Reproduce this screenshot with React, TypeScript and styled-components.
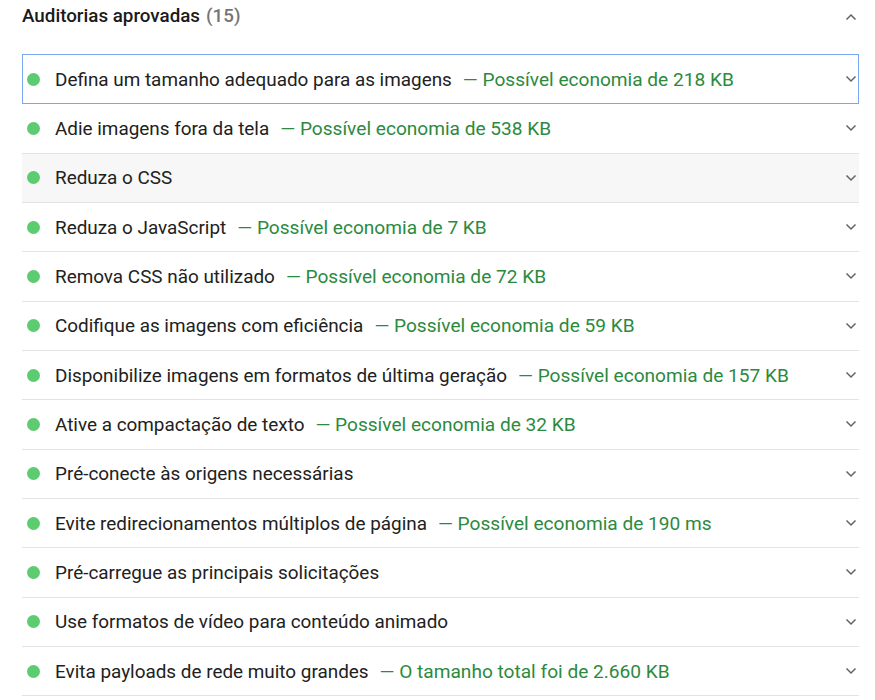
import React from "react";
import styled, { createGlobalStyle } from "styled-components";

const Global = createGlobalStyle`
  html, body { margin: 0; padding: 0; background: #ffffff; }
  body { font-family: Roboto, "Liberation Sans", Arial, sans-serif; color: #212121; }
`;

const Wrap = styled.div`
  padding: 0 16px 0 22px;
  width: 837px;
`;

const Header = styled.div`
  display: flex;
  align-items: center;
  justify-content: space-between;
  height: 34px;
  margin-bottom: 21px;
`;

const Title = styled.div`
  font-size: 18.8px;
  font-weight: 500;
  color: #1a1a1a;
  margin-top: -3px;
  display: flex;
  align-items: center;
  gap: 6px;
`;

const Count = styled.span`
  color: #757575;
  font-weight: 500;
`;

const List = styled.div`
  display: flex;
  flex-direction: column;
`;

const Row = styled.div<{ $focused?: boolean; $hover?: boolean }>`
  box-sizing: border-box;
  height: 49.33px;
  display: flex;
  align-items: center;
  padding: 0 0 0 5px;
  border-bottom: 1px solid #e3e3e3;
  background: ${(p) => (p.$hover ? "#f7f7f7" : "#ffffff")};
  ${(p) =>
    p.$focused &&
    `
    border: 1.5px solid #7aa6ef;
    height: 50.33px;
    margin-top: -1px;
    padding-left: 4px;
  `}
`;

const Dot = styled.span`
  width: 13px;
  height: 13px;
  border-radius: 50%;
  background: #5dcb6f;
  flex: none;
  margin-right: 15px;
`;

const Label = styled.span`
  font-size: 18.9px;
  color: #212121;
  white-space: nowrap;
`;

const Extra = styled.span`
  font-size: 19.1px;
  color: #2b8a3e;
  margin-left: 11px;
  white-space: nowrap;
`;

const ChevronBox = styled.span<{ $focused?: boolean }>`
  margin-left: auto;
  width: 14px;
  display: flex;
  align-items: center;
  justify-content: center;
  margin-right: ${(p) => (p.$focused ? "0px" : "1px")};
`;

const Chevron = ({ up }: { up?: boolean }) => (
  <svg width="12" height="8" viewBox="0 0 12 8">
    <polyline
      points={up ? "1.5,6.5 6,2 10.5,6.5" : "1.5,1.5 6,6 10.5,1.5"}
      fill="none"
      stroke="#5f6368"
      strokeWidth="1.5"
    />
  </svg>
);

const items: { label: string; extra?: string }[] = [
  { label: "Defina um tamanho adequado para as imagens", extra: "Possível economia de 218 KB" },
  { label: "Adie imagens fora da tela", extra: "Possível economia de 538 KB" },
  { label: "Reduza o CSS" },
  { label: "Reduza o JavaScript", extra: "Possível economia de 7 KB" },
  { label: "Remova CSS não utilizado", extra: "Possível economia de 72 KB" },
  { label: "Codifique as imagens com eficiência", extra: "Possível economia de 59 KB" },
  { label: "Disponibilize imagens em formatos de última geração", extra: "Possível economia de 157 KB" },
  { label: "Ative a compactação de texto", extra: "Possível economia de 32 KB" },
  { label: "Pré-conecte às origens necessárias" },
  { label: "Evite redirecionamentos múltiplos de página", extra: "Possível economia de 190 ms" },
  { label: "Pré-carregue as principais solicitações" },
  { label: "Use formatos de vídeo para conteúdo animado" },
  { label: "Evita payloads de rede muito grandes", extra: "O tamanho total foi de 2.660 KB" },
];

export default function App() {
  return (
    <>
      <Global />
      <Wrap>
        <Header>
          <Title>
            Auditorias aprovadas <Count>(15)</Count>
          </Title>
          <ChevronBox>
            <Chevron up />
          </ChevronBox>
        </Header>
        <List>
          {items.map((it, i) => (
            <Row key={i} $focused={i === 0} $hover={i === 2}>
              <Dot />
              <Label>{it.label}</Label>
              {it.extra && <Extra>— {it.extra}</Extra>}
              <ChevronBox $focused={i === 0}>
                <Chevron />
              </ChevronBox>
            </Row>
          ))}
        </List>
      </Wrap>
    </>
  );
}
